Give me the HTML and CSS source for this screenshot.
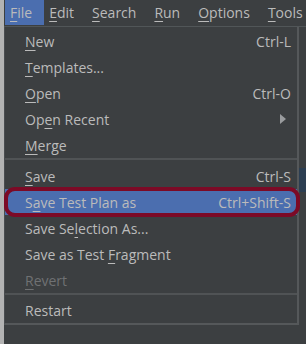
FILE: index.html
```html
<!DOCTYPE html>
<html>
<head>
<meta charset="utf-8">
<link rel="stylesheet" href="styles.css">
</head>
<body>
<div class="app">
  <div class="strip"></div>
  <div class="main">
    <div class="menubar">
      <span class="mb-item active"><u>F</u>ile</span>
      <span class="mb-item"><u>E</u>dit</span>
      <span class="mb-item"><u>S</u>earch</span>
      <span class="mb-item"><u>R</u>un</span>
      <span class="mb-item"><u>O</u>ptions</span>
      <span class="mb-item"><u>T</u>ools</span>
    </div>
    <div class="below">
      <div class="popup">
        <div class="item"><span><u>N</u>ew</span><span class="key">Ctrl-L</span></div>
        <div class="item"><span><u>T</u>emplates...</span></div>
        <div class="item"><span><u>O</u>pen</span><span class="key">Ctrl-O</span></div>
        <div class="item"><span>Op<u>e</u>n Recent</span><svg class="arrow" width="6" height="10" viewBox="0 0 6 10"><polygon points="0,0 6,5 0,10" fill="#9a9c9e"/></svg></div>
        <div class="item"><span><u>M</u>erge</span></div>
        <div class="sep"></div>
        <div class="item"><span><u>S</u>ave</span><span class="key">Ctrl-S</span></div>
        <div class="item selected"><span>S<u>a</u>ve Test Plan as</span><span class="key">Ctrl+Shift-S</span><div class="mark"></div></div>
        <div class="item"><span>Save Se<u>l</u>ection As...</span></div>
        <div class="item"><span>Save as Test <u>F</u>ragment</span></div>
        <div class="item disabled"><span><u>R</u>evert</span></div>
        <div class="sep"></div>
        <div class="item last"><span>Restart</span></div>
      </div>
      <div class="behind"></div>
    </div>
  </div>
</div>
</body>
</html>
```

FILE: styles.css
```css
html, body {
  margin: 0;
  padding: 0;
  background: #3c3f41;
}
body {
  width: 306px;
  height: 344px;
  overflow: hidden;
  font-family: "Open Sans", "Noto Sans", sans-serif;
  font-size: 14px;
  color: #bbbbbb;
}
u {
  text-decoration: underline;
  text-underline-offset: 3px;
  text-decoration-thickness: 1px;
}
.app {
  display: flex;
  height: 344px;
}
.strip {
  width: 4px;
  flex: none;
  background: #b3b3b3;
}
.main {
  flex: 1;
  display: flex;
  flex-direction: column;
}
.menubar {
  display: flex;
  height: 26px;
  border-bottom: 1px solid #515658;
  padding-left: 1px;
}
.mb-item {
  display: flex;
  align-items: center;
  padding: 0 13px 0 5px;
  height: 25px;
  white-space: nowrap;
}
.mb-item.active {
  background: #4b6eaf;
  padding-right: 12px;
}
.below {
  display: flex;
  align-items: flex-start;
}
.popup {
  width: 292px;
  border-left: 1px solid #4a4d50;
  border-right: 2px solid #55585a;
  border-bottom: 2px solid #55585a;
  padding-top: 1px;
}
.item {
  position: relative;
  display: flex;
  align-items: center;
  justify-content: space-between;
  height: 26px;
  padding: 0 6px 0 20px;
  white-space: nowrap;
}
.item.last {
  height: 25px;
}
.item.selected {
  background: #4b6eaf;
}
.item.disabled {
  color: #6f7173;
}
.arrow {
  margin-right: 5px;
}
.sep {
  height: 2px;
  background: #505355;
  margin-bottom: 3px;
}
.mark {
  position: absolute;
  left: -1px;
  right: -3px;
  top: -2px;
  bottom: -2px;
  border: 4px solid #7c0a26;
  border-radius: 11px;
}
.behind {
  margin-top: 141px;
  width: 8px;
  height: 24px;
  background: #2c3e52;
}
```
